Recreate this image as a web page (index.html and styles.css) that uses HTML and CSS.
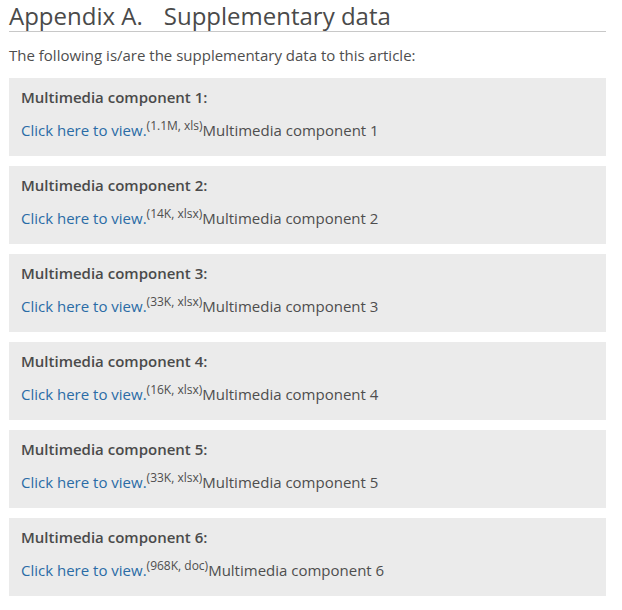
FILE: index.html
```html
<!DOCTYPE html>
<html>
<head>
<meta charset="utf-8">
<link rel="stylesheet" href="styles.css">
</head>
<body>
<section class="appendix">
  <h2 class="title"><span class="label">Appendix A.</span>Supplementary data</h2>
  <p class="intro">The following is/are the supplementary data to this article:</p>
  <div class="items">
    <div class="item">
      <div class="item-title">Multimedia component 1:</div>
      <div class="item-link"><a href="#">Click here to view.</a><sup>(1.1M, xls)</sup>Multimedia component 1</div>
    </div>
    <div class="item">
      <div class="item-title">Multimedia component 2:</div>
      <div class="item-link"><a href="#">Click here to view.</a><sup>(14K, xlsx)</sup>Multimedia component 2</div>
    </div>
    <div class="item">
      <div class="item-title">Multimedia component 3:</div>
      <div class="item-link"><a href="#">Click here to view.</a><sup>(33K, xlsx)</sup>Multimedia component 3</div>
    </div>
    <div class="item">
      <div class="item-title">Multimedia component 4:</div>
      <div class="item-link"><a href="#">Click here to view.</a><sup>(16K, xlsx)</sup>Multimedia component 4</div>
    </div>
    <div class="item">
      <div class="item-title">Multimedia component 5:</div>
      <div class="item-link"><a href="#">Click here to view.</a><sup>(33K, xlsx)</sup>Multimedia component 5</div>
    </div>
    <div class="item">
      <div class="item-title">Multimedia component 6:</div>
      <div class="item-link"><a href="#">Click here to view.</a><sup>(968K, doc)</sup>Multimedia component 6</div>
    </div>
  </div>
</section>
</body>
</html>
```
FILE: styles.css
```css
html, body {
  margin: 0;
  padding: 0;
  background: #fff;
}
body {
  font-family: "Open Sans", "Liberation Sans", sans-serif;
  color: #4e4e4e;
}
.appendix {
  width: 597px;
  margin-left: 9px;
}
.title {
  margin: 0;
  padding-top: 0;
  font-size: 24px;
  font-weight: 400;
  line-height: 31px;
  color: #4a4a4a;
  border-bottom: 1px solid #c8c8c8;
}
.label {
  margin-right: 21px;
}
.intro {
  margin: 12px 0 0 0;
  font-size: 15px;
  line-height: 22px;
}
.items {
  margin-top: 12px;
  display: flex;
  flex-direction: column;
  gap: 10px;
}
.item {
  background: #ebebeb;
  height: 78px;
  box-sizing: border-box;
  padding: 8px 12px 0 12px;
  font-size: 15px;
}
.item-title {
  font-weight: 600;
  line-height: 22px;
  color: #4a4a4a;
}
.item-link {
  margin-top: 11px;
  line-height: 22px;
}
.item-link a {
  color: #2a6ca6;
  text-decoration: none;
}
.item-link sup {
  font-size: 12px;
  line-height: 0;
  vertical-align: 6px;
}
```
